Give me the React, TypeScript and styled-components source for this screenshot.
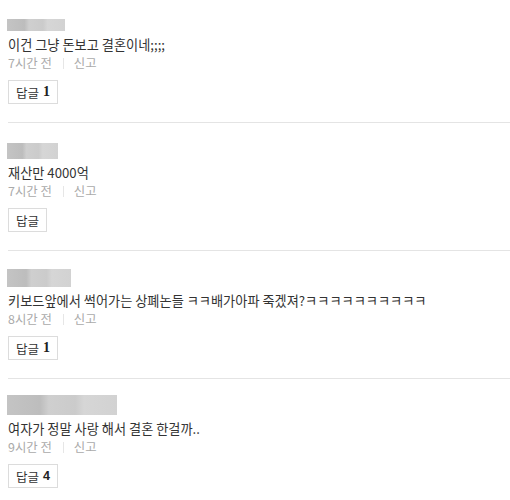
import styled, { createGlobalStyle } from "styled-components";
import React from "react";

const GlobalStyle = createGlobalStyle`
  body {
    margin: 0;
    background: #fff;
    font-family: "Noto Sans CJK KR", "Noto Sans", sans-serif;
    color: #333;
  }
`;

const CommentList = styled.ul`
  list-style: none;
  margin: 0;
  padding: 0 0 0 8px;
`;

const CommentItem = styled.li`
  padding: 17px 0 18px;
  border-bottom: 1px solid #e4e4e4;
  &:first-child {
    padding-top: 12px;
  }
  &:last-child {
    border-bottom: none;
  }
`;

const NameRow = styled.div`
  height: 20px;
  display: flex;
  align-items: flex-end;
  padding-bottom: 1px;
  box-sizing: border-box;
`;

const BlurredName = styled.span<{ $w: number; $h: number }>`
  display: block;
  width: ${(p) => p.$w}px;
  height: ${(p) => p.$h}px;
  margin-left: -1px;
  background: linear-gradient(
    90deg,
    #c4c4c4 0%,
    #bdbdbd 30%,
    #cfcfcf 38%,
    #cbcbcb 62%,
    #d6d6d6 70%,
    #d2d2d2 100%
  );
  filter: blur(0.6px);
`;

const Body = styled.p`
  margin: 4px 0 0;
  font-size: 13.2px;
  line-height: 18px;
  color: #333;
  white-space: nowrap;
`;

const Meta = styled.div`
  display: flex;
  align-items: center;
  font-size: 12.4px;
  line-height: 18px;
  color: #aaa;
`;

const Divider = styled.span`
  width: 1px;
  height: 11px;
  background: #e6e6e6;
  margin: 0 10px 0 11px;
`;

const ReplyButton = styled.button`
  display: inline-flex;
  align-items: center;
  margin-top: 8px;
  height: 24px;
  padding: 0 7px;
  border: 1px solid #dcdcdc;
  background: #fff;
  font-family: "Noto Sans CJK KR", "Noto Sans", sans-serif;
  font-size: 12.5px;
  color: #333;
  cursor: pointer;
`;

const Count = styled.b<{ $serif?: boolean }>`
  margin-left: 4px;
  font-family: ${(p) =>
    p.$serif ? '"Liberation Serif", serif' : '"Liberation Sans", sans-serif'};
  font-size: ${(p) => (p.$serif ? "14px" : "12.5px")};
  font-weight: 700;
  color: #222;
`;

type Comment = {
  nameW: number;
  nameH: number;
  text: string;
  time: string;
  replies: number;
  serif?: boolean;
};

const comments: Comment[] = [
  { nameW: 58, nameH: 12, text: "이건 그냥 돈보고 결혼이네;;;;", time: "7시간 전", replies: 1, serif: true },
  { nameW: 51, nameH: 16, text: "재산만 4000억", time: "7시간 전", replies: 0 },
  {
    nameW: 64,
    nameH: 18,
    text: "키보드앞에서 썩어가는 상폐논들 ㅋㅋ배가아파 죽겠져?ㅋㅋㅋㅋㅋㅋㅋㅋㅋㅋ",
    time: "8시간 전",
    replies: 1,
    serif: true,
  },
  { nameW: 110, nameH: 20, text: "여자가 정말 사랑 해서 결혼 한걸까..", time: "9시간 전", replies: 4 },
];

export default function App() {
  return (
    <>
      <GlobalStyle />
      <CommentList>
        {comments.map((c, i) => (
          <CommentItem key={i}>
            <NameRow>
              <BlurredName $w={c.nameW} $h={c.nameH} />
            </NameRow>
            <Body>{c.text}</Body>
            <Meta>
              <span>{c.time}</span>
              <Divider />
              <span>신고</span>
            </Meta>
            <ReplyButton>
              답글
              {c.replies > 0 && <Count $serif={c.serif}>{c.replies}</Count>}
            </ReplyButton>
          </CommentItem>
        ))}
      </CommentList>
    </>
  );
}
